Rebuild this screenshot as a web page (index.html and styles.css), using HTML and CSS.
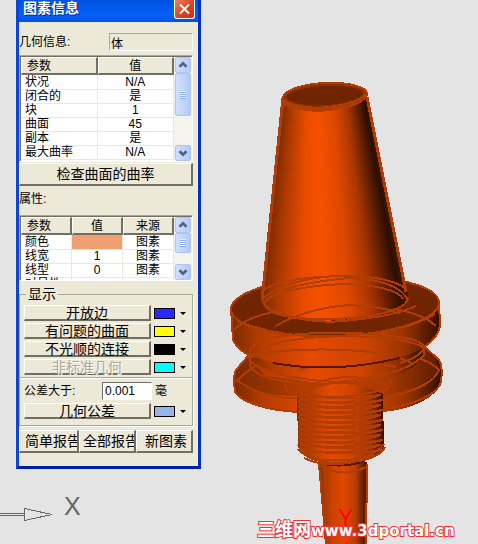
FILE: index.html
```html
<!DOCTYPE html>
<html lang="zh-CN">
<head>
<meta charset="utf-8">
<title>图素信息</title>
<link rel="stylesheet" href="styles.css">
</head>
<body>
<svg class="scene" viewBox="0 0 478 544" preserveAspectRatio="xMinYMin meet" role="img" aria-label="刀柄模型">
  <defs>
    <linearGradient id="cone">
      <stop offset="0" stop-color="#7c2b00"/><stop offset=".1" stop-color="#a93800"/>
      <stop offset=".28" stop-color="#e94b00"/><stop offset=".42" stop-color="#f65000"/>
      <stop offset=".6" stop-color="#dc4800"/><stop offset=".75" stop-color="#a83600"/>
      <stop offset=".88" stop-color="#5a1d00"/><stop offset=".96" stop-color="#2c0e00"/>
      <stop offset="1" stop-color="#451700"/>
    </linearGradient>
    <linearGradient id="rim">
      <stop offset="0" stop-color="#7a2a00"/><stop offset=".14" stop-color="#b33c00"/>
      <stop offset=".38" stop-color="#e64a00"/><stop offset=".65" stop-color="#cc4300"/>
      <stop offset=".83" stop-color="#9a3300"/><stop offset=".95" stop-color="#501a00"/>
      <stop offset="1" stop-color="#2e0f00"/>
    </linearGradient>
    <linearGradient id="ledge">
      <stop offset="0" stop-color="#7a2a00"/><stop offset=".3" stop-color="#ae3a00"/>
      <stop offset=".5" stop-color="#c84200"/><stop offset=".75" stop-color="#a83800"/>
      <stop offset="1" stop-color="#5c1e00"/>
    </linearGradient>
    <linearGradient id="shank">
      <stop offset="0" stop-color="#8a3000"/><stop offset=".25" stop-color="#c74100"/>
      <stop offset=".5" stop-color="#df4800"/><stop offset=".75" stop-color="#bd3e00"/>
      <stop offset="1" stop-color="#3c1300"/>
    </linearGradient>
  </defs>

  <!-- shank -->
  <path fill="url(#shank)" d="M319 463L326 544H366L367 462Z"/>
  <g class="edge">
    <path d="M319 464L326 544M324 466L329 544M367 464L366 544M319 465Q343 479 366 467"/>
  </g>
  <path class="shadow" d="M320 463Q342 469 365 461"/>

  <!-- lower flange -->
  <path fill="url(#rim)" d="M249 355L236 370Q233 375 235 392C241 402 265 410 298 412H383C415 409 438 396 441 382Q444 366 439 360L424 346Z"/>
  <path fill="url(#ledge)" d="M249 357C231 371 229 384 252 390Q270 396 300 396H380Q423 389 438 371Q440 360 424 349L414 370L337 385L265 376Z"/>
  <g class="edge">
    <path d="M249 355L236 370Q233 375 235 392C241 402 265 410 298 412M383 409C415 405 438 394 441 382Q443 366 439 360L424 346"/>
    <path d="M236 382C250 366 266 360 286 357M251 357C246 366 254 374 272 379Q323 390 373 379Q411 370 424 350"/>
    <path d="M381 398C413 393 435 382 439 370Q430 360 404 354M289 392C275 378 298 372 333 370C366 369 390 374 391 382Q391 389 379 393M236 380Q264 399 297 398"/>
  </g>

  <!-- groove between the flanges -->
  <path fill="url(#rim)" d="M249 347C249 370 265 376 337 383C406 378 424 369 424 344Z"/>
  <g class="edge">
    <path d="M249 340V358M424 336V356M250 357Q326 347 380 353Q408 359 413 365M298 370Q349 356 396 367"/>
    <path d="M251 362Q275 379 337 382Q404 376 423 356"/>
  </g>

  <!-- upper flange -->
  <path fill="url(#rim)" d="M231 308L233 340Q239 351 249 355C273 366 313 367 337 367C370 366 407 359 424 347Q438 338 440 326L439 302Z"/>
  <ellipse class="face" cx="335.500" cy="305.500" rx="104" ry="30" transform="rotate(-2 335 305)"/>
  <g class="edge">
    <ellipse cx="335" cy="306" rx="104" ry="30" transform="rotate(-2 335 306)"/>
    <path d="M231 308L233 340Q239 351 249 355M439 302L440 326Q438 338 424 347"/>
    <path d="M234 330C249 312 301 305 347 305Q415 306 436 326M251 355C243 343 275 334 322 333C374 332 422 337 424 347Q421 357 400 363"/>
    <path d="M257 352Q278 337 347 336Q411 338 424 348M249 355Q315 345 378 353M239 322Q286 339 337 336Q405 333 435 314"/>
  </g>
  <path class="shadow" d="M273 363Q334 374 400 358"/>

  <!-- taper -->
  <path fill="url(#cone)" d="M262 295V304Q264 313 285 317Q322 325 368 316Q406 309 408 297V292Z"/>
  <g id="taper"></g>
  <g class="edge">
    <path class="outline" d="M283 98L262 300M367 97L406 292"/>
    <path d="M262 299C264 313 292 320 325 319C375 319 407 309 408 298M264 304C272 288 317 281 349 278Q398 280 408 300"/>
    <path d="M264 298C280 282 322 275 349 276Q389 277 405 288M265 300Q289 286 345 284Q396 286 403 299M262 292Q272 280 320 277"/>
    <path d="M275 326Q308 308 349 305Q383 307 400 313M274 311Q312 326 352 320Q394 316 416 306"/>
    <ellipse class="cap" cx="325" cy="96" rx="42" ry="13" transform="rotate(-3 325 96)"/>
    <path d="M284 104Q304 113 330 110Q361 106 366 96M284 101Q304 110 329 107Q359 103 365 94"/>
  </g>
  <ellipse class="face" cx="325" cy="95.500" rx="38" ry="9.500" transform="rotate(-3 325 95)"/>

  <!-- threaded section -->
  <path fill="url(#rim)" d="M297 394Q340 374 383 394L384 446Q381 455 364 460Q340 465 312 460Q299 454 298 446Z"/>
  <g class="edge" id="thread"></g>
  <g class="edge">
    <path d="M298 445Q304 459 324 460Q371 463 384 444M298 449Q312 464 342 463Q378 461 385 447M304 458Q333 472 374 455"/>
    <path d="M297 396Q337 371 384 393M295 393Q343 365 388 386"/>
  </g>

  <!-- coordinate axes -->
  <path class="axis" d="M0 513.500H24M0 515.500H24M24.500 508.500V520.500L52 514.500Z"/>
  <text class="axis-x" x="64" y="515">X</text>
  <text class="axis-y" x="338" y="526">Y</text>
  <rect class="origin" x="346" y="542" width="1" height="2"/>
  <text class="watermark" x="257" y="536"><tspan class="site">三维网</tspan>www.3dportal.cn</text>
</svg>

<section class="dialog" aria-labelledby="dialog-title">
  <header class="titlebar">
    <h1 id="dialog-title">图素信息</h1>
    <button class="close" aria-label="关闭"><svg viewBox="0 0 20 20"><path d="M5 5L15 15M15 5L5 15"/></svg></button>
  </header>
  <div class="content">
    <div class="info">
      <label for="geometry">几何信息:</label>
      <input id="geometry" value="体" readonly>
    </div>

    <div class="list geometry">
      <div class="rows">
        <table>
          <thead><tr><th>参数</th><th>值</th></tr></thead>
          <tbody>
            <tr><td>状况</td><td>N/A</td></tr>
            <tr><td>闭合的</td><td>是</td></tr>
            <tr><td>块</td><td>1</td></tr>
            <tr><td>曲面</td><td>45</td></tr>
            <tr><td>副本</td><td>是</td></tr>
            <tr><td>最大曲率</td><td>N/A</td></tr>
          </tbody>
        </table>
      </div>
      <div class="scrollbar">
        <button aria-label="向上"><svg viewBox="0 0 16 16"><path d="M4 10L8 6L12 10"/></svg></button>
        <div class="track"><div class="thumb long"></div></div>
        <button aria-label="向下"><svg viewBox="0 0 16 16"><path d="M4 6L8 10L12 6"/></svg></button>
      </div>
    </div>
    <button class="bevel large">检查曲面的曲率</button>

    <h2>属性:</h2>
    <div class="list attributes">
      <div class="rows">
        <table>
          <thead><tr><th>参数</th><th>值</th><th>来源</th></tr></thead>
          <tbody>
            <tr><td>颜色</td><td class="color" aria-label="橙色"></td><td>图素</td></tr>
            <tr><td>线宽</td><td>1</td><td>图素</td></tr>
            <tr><td>线型</td><td>0</td><td>图素</td></tr>
            <tr><td>对号性</td><td></td><td></td></tr>
          </tbody>
        </table>
      </div>
      <div class="scrollbar">
        <button aria-label="向上"><svg viewBox="0 0 16 16"><path d="M4 10L8 6L12 10"/></svg></button>
        <div class="track"><div class="thumb"></div></div>
        <button aria-label="向下"><svg viewBox="0 0 16 16"><path d="M4 6L8 10L12 6"/></svg></button>
      </div>
    </div>

    <fieldset>
      <legend>显示</legend>
      <div class="options">
        <div class="option"><button class="bevel">开放边</button><button class="picker" aria-label="开放边颜色"><span class="swatch blue"></span></button></div>
        <div class="option"><button class="bevel">有问题的曲面</button><button class="picker" aria-label="曲面颜色"><span class="swatch yellow"></span></button></div>
        <div class="option"><button class="bevel">不光顺的连接</button><button class="picker" aria-label="连接颜色"><span class="swatch black"></span></button></div>
        <div class="option"><button class="bevel" disabled>非标准几何</button><button class="picker" aria-label="几何颜色"><span class="swatch cyan"></span></button></div>
      </div>
      <div class="options tolerance">
        <div class="limit">
          <label for="limit">公差大于:</label>
          <input id="limit" value="0.001">
          <span>毫</span>
        </div>
        <div class="option"><button class="bevel">几何公差</button><button class="picker" aria-label="公差颜色"><span class="swatch steel"></span></button></div>
      </div>
    </fieldset>

    <footer>
      <button class="bevel large">简单报告</button>
      <button class="bevel large">全部报告</button>
      <button class="bevel large">新图素</button>
    </footer>
  </div>
</section>
<script src="model.js"></script>
</body>
</html>
```
FILE: styles.css
```css
* { box-sizing: border-box; }

body {
  margin: 0;
  min-height: 100vh;
  background: #e4e4e4;
  color: #000;
  font: 12px/14px "Liberation Sans", "Noto Sans CJK SC", sans-serif;
  overflow: hidden;
}

button, input { font: inherit; color: inherit; margin: 0; border-radius: 0; }
button { padding: 0; }

/* model view */
.scene {
  position: absolute;
  inset: 0;
  width: 100vw;
  height: 100vh;
}
.scene path, .scene ellipse { shape-rendering: crispEdges; }
.face { fill: #702500; }
.edge { fill: none; stroke: #b23d04; stroke-width: 2; }
.edge .outline { stroke-width: 3; }
.edge .cap { fill: #8d3000; }
.shadow { fill: none; stroke: #571408; stroke-width: 2; }
.axis { fill: none; stroke: #666; }
.axis-x, .axis-y { font: 25px "Liberation Sans", sans-serif; }
.axis-x { fill: #666; }
.axis-y { font-size: 23px; fill: #f00; }
.origin { fill: #f00; }
.watermark {
  font: bold 15px "DejaVu Sans", "Noto Sans CJK SC", sans-serif;
  fill: #fff;
  stroke: #e33;
  stroke-width: 2px;
  paint-order: stroke;
}
.site { font-size: 18px; }

/* dialog */
.dialog {
  position: relative;
  width: 185px;
  margin-left: 16px;
  border: solid #0a45d8;
  border-width: 0 3px 3px;
  border-right-color: #0031c4;
  border-bottom-color: #0020a8;
  background: #ece9d8;
}
.titlebar {
  display: flex;
  justify-content: space-between;
  align-items: flex-start;
  height: 22px;
  padding: 0 3px 0 4px;
  background: linear-gradient(#0252e0, #0460fa 70%, #0250dc);
}
h1 {
  margin: 0;
  font-size: 14px;
  line-height: 16px;
  color: #fff;
  text-shadow: 1px 1px #0a2a80;
}
.close {
  width: 21px;
  height: 19px;
  border: 1px solid #fff;
  border-top: 0;
  border-radius: 0 0 3px 3px;
  background: linear-gradient(135deg, #ee8060, #d8401c 60%, #c03810);
}
.close svg { display: block; width: 19px; height: 18px; }
.close path { stroke: #fff; stroke-width: 2; }

.content { padding: 11px 5px 13px 0; }
.info { display: flex; justify-content: space-between; align-items: center; }
.info input {
  width: 84px;
  height: 18px;
  padding: 0 1px;
  border: 1px solid;
  border-color: #aca899 #fff #fff #aca899;
  background: none;
}

.list {
  display: flex;
  border: 1px solid;
  border-color: #aca899 #fff #fff #aca899;
  box-shadow: inset 1px 1px #716f64;
  background: #fff;
  padding: 1px 0 0 1px;
  overflow: hidden;
}
.geometry { height: 107px; margin: 4px 0 1px; }
.attributes { height: 66px; margin-bottom: 6px; }
.rows { flex: 1; min-width: 0; }
table {
  width: 100%;
  border-collapse: separate;
  border-spacing: 0;
  table-layout: fixed;
}
th {
  height: 18px;
  padding: 0 5px;
  border: solid;
  border-width: 1px 2px 2px 1px;
  border-color: #fff #716f64 #716f64 #fff;
  background: #ece9d8;
  font-weight: normal;
}
th:first-child, td:first-child { text-align: left; }
tbody tr:first-child td { height: 15px; }
td {
  height: 14px;
  padding: 0 4px;
  border: solid #ece9d8;
  border-width: 0 1px 1px 0;
  line-height: 13px;
  text-align: center;
  white-space: nowrap;
}
.color { background: #f0a070; }

.scrollbar {
  display: flex;
  flex-direction: column;
  width: 18px;
  padding: 0 1px;
  background: #f4f3ee;
}
.scrollbar button, .thumb {
  border: 1px solid #b0c4f4;
  border-radius: 2px;
  background: linear-gradient(90deg, #d0dffc, #b6caf8);
}
.scrollbar button { height: 16px; flex: none; }
.scrollbar svg { display: block; width: 14px; height: 14px; }
.scrollbar path { fill: none; stroke: #4d6185; stroke-width: 3; }
.track { flex: 1; }
.thumb { display: flex; height: 20px; }
.thumb.long { height: 43px; }
.thumb::before {
  content: "";
  width: 6px;
  height: 8px;
  margin: auto;
  background: repeating-linear-gradient(#eef4fe 0 1px, #8cb0f8 1px 2px);
}

.bevel {
  height: 16px;
  border: solid;
  border-width: 1px 2px 2px 1px;
  border-color: #fff #716f64 #716f64 #fff;
  background: #ece9d8;
  font-size: 14px;
  line-height: 12px;
  white-space: nowrap;
}
.bevel:disabled { color: #aca899; text-shadow: 1px 1px #fff; }
.bevel.large { width: 100%; height: 23px; line-height: 18px; overflow: hidden; }

h2 { margin: 6px 0 9px; font-size: 12px; font-weight: normal; }

fieldset {
  min-width: 0;
  margin: 0 0 4px;
  padding: 0;
  border: 1px solid #aca899;
  box-shadow: 1px 1px #fff;
}
legend { margin-left: 6px; padding: 0 2px; font-size: 14px; line-height: 14px; }
.options { display: grid; gap: 2px; padding: 4px 5px 2px 4px; }
.tolerance { gap: 3px; border-top: 1px solid #aca899; box-shadow: inset 0 1px #fff; padding-bottom: 6px; }
.option { display: flex; align-items: center; gap: 3px; }
.option .bevel { flex: 1; }
.picker {
  display: flex;
  align-items: center;
  gap: 5px;
  width: 33px;
  border: 0;
  background: none;
}
.picker::after {
  content: "";
  border: solid transparent;
  border-width: 3px 3px 0;
  border-top-color: #000;
}
.swatch { width: 21px; height: 11px; border: 1px solid #000; }
.blue { background: #2828ff; }
.yellow { background: #ff0; }
.black { background: #000; }
.cyan { background: #0ff; }
.steel { background: #98b4e4; }

.limit { display: flex; align-items: center; }
.limit label { width: 78px; }
.limit input {
  width: 50px;
  height: 18px;
  margin-right: 3px;
  padding: 0 2px;
  border: 1px solid;
  border-color: #716f64 #fff #fff #716f64;
  background: #fff;
}

footer { display: grid; grid-template-columns: 60fr 57fr 57fr; }
footer .bevel { padding-left: 5px; text-align: left; }
footer .bevel:last-child { padding-left: 8px; }
footer .bevel:nth-child(2) { padding-left: 3px; }
```
FILE: model.js
```js
const ns = "http://www.w3.org/2000/svg";

function addPath(parent, attributes) {
  const path = document.createElementNS(ns, "path");
  for (const name in attributes) path.setAttribute(name, attributes[name]);
  parent.appendChild(path);
}

// The taper is shaded in thin bands, so the gradient widens with it.
const taper = document.getElementById("taper");
for (let y = 98; y < 300; y += 2) {
  const left = Math.round(283 - (y - 98) * 0.104);
  const right = Math.round(367 + (y - 98) * 0.195);
  addPath(taper, { d: `M${left} ${y}H${right}V${y + 2}H${left}Z`, fill: "url(#cone)" });
}

// Thread turns, alternating in tilt.
const thread = document.getElementById("thread");
for (let y = 392, turn = 0; y < 450; y += 5, turn++) {
  const tilt = turn % 2 ? 3 : -2;
  addPath(thread, { d: `M298 ${y}Q330 ${y + 11} 383 ${y + tilt}` });
  addPath(thread, { d: `M299 ${y + 3}Q350 ${y + 10} 383 ${y - tilt}`, "stroke-dasharray": "22 4 31 3" });
}
```
